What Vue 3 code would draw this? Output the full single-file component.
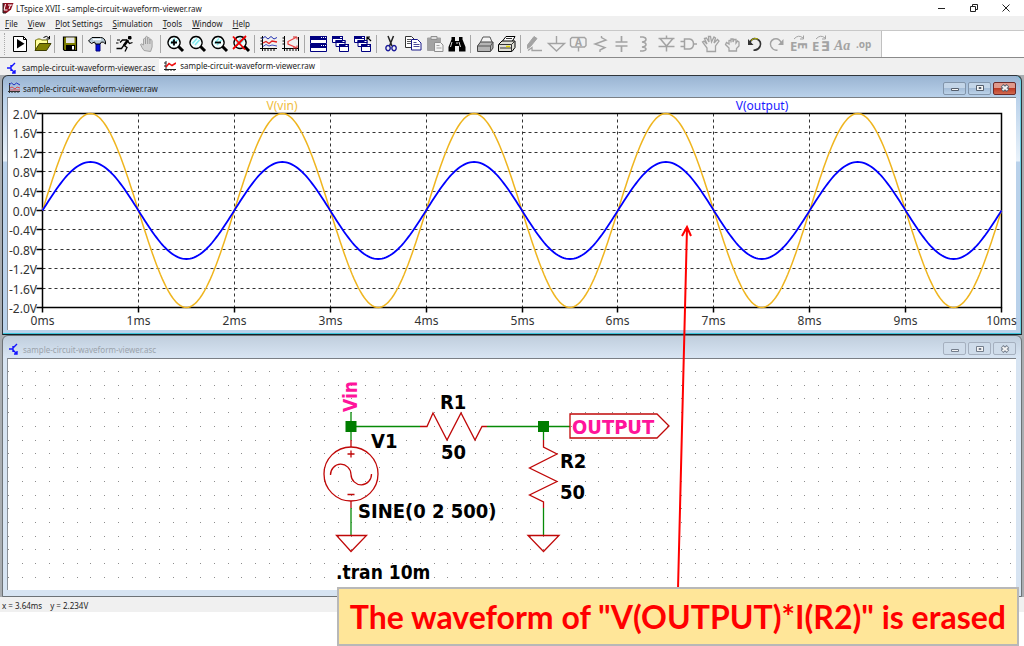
<script setup>
const menus = ['File', 'View', 'Plot Settings', 'Simulation', 'Tools', 'Window', 'Help']

const G = '#a3a3a3'
const N = 'none'
const K = '#000'
const NAVY = '#000080'

// Each shape: [path, fill, stroke, stroke width]
const lens = [
  ['M13 12L18 17', N, K, 3],
  ['M9 2.5A6 6 0 1 0 9.1 2.5Z', '#f4ffff', K, 1.4],
  ['M5.5 9.5L10 4.5M8 11L12.5 6', N, '#7fe9ee', 1.6]
]
const cascade = [
  ['M1.5 2.5h10v6h-10z', '#fff', NAVY, 1], ['M1 2h11v3H1z', NAVY, N, 0],
  ['M5 6.500h9v6h-9z', '#fff', NAVY, 1], ['M4.500 6h10v3h-10z', NAVY, N, 0],
  ['M8.500 10.500h9v7h-9z', '#fff', NAVY, 1], ['M8 10h10v3H8z', NAVY, N, 0],
  ['M9 3.500h2M11.500 7.500h2M14.500 11.500h2', N, '#fff', 1]
]
const axes = ['M3.5 2v15M1 14.5h17M1.500 4h2M1.500 7h2M1.500 10h2M6 15v2M9 15v2M12 15v2M15 15v2', N, K, 1]

const toolbar = [
  { name: 'Run', shapes: [['M4.500 2.500h10l3 3v12h-13z', '#fff', K, 1], ['M14.500 2.500v3h3', N, K, 1], ['M8 5l7.500 4.700L8 14.500z', K, N, 0]] },
  { name: 'Open', shapes: [['M4.500 16V6h1l1-1h3l1 1h6v3', '#ffff9c', '#6b6b00', 1], ['M4 16.500L8.500 9.500H20L15.500 16.500z', '#808000', '#3d3d00', 1], ['M12.500 3.500q3-2.500 5.500.500M18.500 2v3h-3', N, K, 1]] },
  { sep: true },
  { name: 'Save', shapes: [['M4.500 3h13v13.500H5.500l-1-1z', '#808000', K, 1.2], ['M7 3.500h8.500v5.500H7z', '#e6e6e6', N, 0], ['M7 11h9v5.500H7z', K, N, 0], ['M13 12h2v3.500h-2z', '#fff', N, 0]] },
  { sep: true },
  { name: 'Control Panel', shapes: [['M9 9h4v8H9z', '#0010d8', NAVY, 1], ['M5 3.500h8.500q4 0 5 4.500v2q-2-2.500-4-2l-1.500 2H8.500L7.500 8L4.500 9.500L1.500 7z', '#b9cdd8', K, 1], ['M6 5.500h8', N, '#fff', 1.5]] },
  { sep: true },
  { name: 'Start', shapes: [['M13.500 2.500h2.500v2.500h-2.500z', K, K, 1], ['M13 6L9 11.500', N, K, 2.6], ['M12 6H7.500L5 8.500M12.500 7L14.500 9.500L17.500 8.500M9 11.500L12 13.500L10 17.500M9 11L6.500 14.500H1.500', N, K, 1.3], ['M2 6h3M1 9h2.500', N, K, 1]] },
  { name: 'Halt', shapes: [['M7 16.500Q5 14 3.500 10.500q1-1.500 3 .500V5q1.500-1.500 2 0V3q1.500-1.500 2.200 0v1q1.500-1.200 2.200.500V6q1.500-1 2.200.500V13l-1.500 4.500z', '#d4d4d4', G, 1], ['M8.500 5v5M10.700 4v6M12.900 5v5', N, '#9a9a9a', 1]] },
  { sep: true },
  { name: 'Zoom in', shapes: [...lens, ['M6 8.500h6M9 5.500v6', N, K, 1.8]] },
  { name: 'Zoom', shapes: lens },
  { name: 'Zoom out', shapes: [...lens, ['M6 8.500h6', N, K, 1.8]] },
  { name: 'Zoom full extents', shapes: [...lens, ['M2 2.500L14 15.500M15 2L2 15', N, '#f00000', 1.8]] },
  { sep: true },
  { name: 'Autorange', shapes: [axes, ['M3 5L6 2.500L9 5L12 2.500L15 5L18 3.500', N, '#2030b0', 1], ['M4 9L7 7.500L10 9.500L13 7L18 8', N, '#e02020', 1.3], ['M4 12.500L7 10.500L10 12L13 11L18 12', N, '#4050c0', 1]] },
  { name: 'Axis range', shapes: [axes, ['M15 3.500L7 7.500V10L15 13.500', N, '#f04040', 1.2], ['M12 3h4v2.500M12 14h4v-2.500', N, '#d02020', 1], ['M17.500 3v14', N, K, 1]] },
  { sep: true },
  { name: 'Tile', shapes: [['M1.500 2.500h16v7h-16zM1.500 10.500h16v7h-16z', '#fff', NAVY, 1], ['M1 2h17v4H1zM1 10h17v4H1z', NAVY, N, 0], ['M12 3.500h1M14 3.500h1M16 3.500h1M12 11.500h1M14 11.500h1M16 11.500h1', N, '#fff', 1]] },
  { name: 'Cascade', shapes: cascade },
  { name: 'Close all', shapes: [...cascade, ['M18 7L14 3M14 6V3h3', N, K, 1.2]] },
  { sep: true },
  { name: 'Cut', shapes: [['M7 2L11 12M12.500 2L8.500 12', N, '#222', 1.5], ['M7 11.500a2.200 2.600 0 1 0 .100 0zM13 11.500a2.200 2.600 0 1 0 .100 0z', N, '#1a1a9a', 1.4]] },
  { name: 'Copy', shapes: [['M2.500 2.500h6l3 3v8h-9z', '#fff', '#333', 1], ['M4 5.500h4M4 7.500h5M4 9.500h5', N, '#555', 1], ['M8.500 5.500h6l3.500 3.500v7h-9.500z', '#fff', '#1a1a8a', 1], ['M10.500 8.500h3M10.500 10.500h6M10.500 12.500h6', N, '#4a4a9a', 1]] },
  { name: 'Paste', shapes: [['M2.500 4h13v12.500h-13z', G, G, 1], ['M6 2.500h6v3H6z', '#ddd', '#8f8f8f', 1], ['M9.500 8.500h6l2.500 2.500v6.500H9.500z', '#f3f3f3', '#8f8f8f', 1], ['M11.500 11.500h3M11.500 14h5', N, G, 1]] },
  { name: 'Find', shapes: [['M4.500 3h3.500v4H12V3h3.500v2.500L18.500 13v4.500h-6.500V12H8v5.500H1.500V13L4.500 5.500z', K, N, 0], ['M5 8L3.500 13M12 8l1.500 5M9 9h2', N, '#ddd', 1]] },
  { sep: true },
  { name: 'Print', shapes: [['M5.500 8L8 3h7l2 5', '#f4f4f4', '#555', 1], ['M2.500 12L5.500 8H18v6l-2.500 3.500h-13z', '#b4b4b4', '#444', 1], ['M2.500 12h13v5.500M15.500 12L18 8', N, '#555', 1]] },
  { name: 'Print setup', shapes: [['M5.500 7L9 2.500h9L15.500 7', '#fff', K, 1], ['M1.500 10.500L5 7h13v6.500L15 17.500H1.500z', '#e0e0d8', K, 1], ['M1.500 10.500h13v7M14.500 10.500L18 7M3 14h11M9 4.500h6', N, '#333', 1], ['M9 12.500h4', N, '#e3d800', 1.500]] },
  { sep: true },
  { name: 'Wire', shapes: [['M9 2.500L12 4.500L5.500 12.500L2.500 14.500V11z', G, G, 1], ['M3 16.500L7 13.500V16.500H17', N, G, 1.3]] },
  { name: 'Ground', shapes: [['M9.500 2v7.500M1.500 9.500h16L9.500 17z', N, G, 1.4]] },
  { name: 'Label net', shapes: [['M3 3.500h12.500l1.500 1.500v6.500l-1.500 1.500H3L1.500 11.500V5zM9.500 13v4.500', N, G, 1.4]], texts: [{ t: 'A', x: 6, y: 12, s: 10 }] },
  { name: 'Resistor', shapes: [['M10.500 2v1.500L15 6L4 10L14 13.500L9 16v2', N, G, 1.4]] },
  { name: 'Capacitor', shapes: [['M8.500 2v6M8.500 12v6M2.500 8h12M2.500 12h12', N, G, 1.7]] },
  { name: 'Inductor', shapes: [['M5 3h3q3 .500 3 2.500T7 8q4 .500 4 2.500T7 13q4 .500 4 2T8 17H5', N, G, 1.5]] },
  { name: 'Diode', shapes: [['M9.500 1.500v3M9.500 12v5.500M1.500 4.500h16M3 4.500L9.500 12L16 4.500M1.500 12.500h16', N, G, 1.5]] },
  { name: 'Component', shapes: [['M5.500 5h5q4 .500 4 5t-4 5h-5zM1.500 7.500h4M1.500 12.500h4M14.500 10H18', N, G, 1.5]] },
  { name: 'Move', shapes: [['M6 17.500V14L1.500 8L3 7l3 3L3.500 4.500L5.500 4L8 8L7.500 2.500h2L10.500 8L13 3l1.500 1L13 9l3.500-3.500L18 7L14.500 12V17.500z', '#eee', G, 1.3]] },
  { name: 'Drag', shapes: [['M6 17V14L2.500 10.500L3.500 8.500L6 10V6.500L8 6v2.500V5h2v3L11 5.500h2V9l1.500-2L16 8V12L13.500 14.500V17z', '#eee', G, 1.3]] },
  { name: 'Undo', shapes: [['M4.500 9Q7 3.500 12 5Q17 7.500 15 12.500Q12.500 17 8.500 16', N, '#333', 1.6], ['M6 6.500Q9 3 13 5', N, '#b4b400', 1], ['M3 5v6h5.500z', '#333', N, 0]] },
  { name: 'Redo', shapes: [['M14.500 9Q12 3.500 7 5Q2 7.500 4 12.500Q6.500 17 10.500 16', N, G, 1.4], ['M16.500 5v6H11z', G, N, 0]] },
  { name: 'Rotate', shapes: [['M5 5Q9.500 0 14 4M14.500 1.500V5H11', N, G, 1]], texts: [{ t: 'E', x: 1, y: 17, s: 13 }, { t: 'E', x: 0, y: 0, s: 13, tf: 'translate(9 8) rotate(90)' }] },
  { name: 'Mirror', shapes: [['M5 5Q9.500 0 14 4M14.500 1.500V5H11', N, G, 1]], texts: [{ t: 'E', x: 1, y: 17, s: 13 }, { t: '∃', x: 10, y: 17, s: 13 }] },
  { name: 'Text', shapes: [], texts: [{ t: 'Aa', x: 1, y: 16, s: 14, serif: true }] },
  { name: 'SPICE directive', shapes: [], texts: [{ t: '.op', x: 1, y: 14, s: 10 }] }
]

const plot = { x0: 42.5, x1: 1001.5, y0: 113.5, y1: 307.5 }
const dx = (plot.x1 - plot.x0) / 10
const dy = (plot.y1 - plot.y0) / 10
const xTicks = Array.from({ length: 11 }, (_, i) => ({ x: Math.floor(plot.x0 + i * dx) + 0.5, label: i + 'ms' }))
const yTicks = Array.from({ length: 11 }, (_, i) => ({ y: Math.floor(plot.y0 + i * dy) + 0.5, label: ((20 - i * 4) / 10).toFixed(1) + 'V' }))

function sine(volts) {
  const mid = (plot.y0 + plot.y1) / 2
  const points = []
  for (let i = 0; i <= 480; i++) {
    const ms = i / 48
    points.push((plot.x0 + ms * dx).toFixed(1) + ',' + (mid - (volts / 0.4) * dy * Math.sin(Math.PI * ms)).toFixed(1))
  }
  return points.join(' ')
}
const vin = sine(2)
const vout = sine(1)

let gridDots = ''
for (let r = 0; r < 16; r++) {
  for (let c = 0; c < 74; c++) {
    gridDots += `M${Math.round(8 + c * 13.73)} ${Math.round(371 + r * 13.73)}.5h1`
  }
}
</script>

<template>
  <div class="app">
    <header class="titlebar">
      <svg class="logo" viewBox="0 0 12 12" aria-hidden="true">
        <path d="M1 1h10.500L9 7.500L4.500 11H1z" fill="#8d1020" />
        <path d="M3.500 2L2 8h3.500M6 3h4.500M8.500 3L7 7" fill="none" stroke="#fff" stroke-width="1" />
        <path d="M1 1v10L4 11" fill="none" stroke="#222" />
      </svg>
      <span class="app-title">LTspice XVII - sample-circuit-waveform-viewer.raw</span>
      <div class="sys">
        <button aria-label="Minimize"><svg viewBox="0 0 10 10"><path d="M1 5.500h7" /></svg></button>
        <button aria-label="Restore"><svg viewBox="0 0 10 10"><path d="M1.500 3.500h5v5h-5zM3.500 3.500v-2h5v5h-2" /></svg></button>
        <button aria-label="Close"><svg viewBox="0 0 10 10"><path d="M1.500 1.500l7 7M8.500 1.500l-7 7" /></svg></button>
      </div>
    </header>

    <nav class="menubar">
      <button v-for="m in menus" :key="m"><u>{{ m[0] }}</u>{{ m.slice(1) }}</button>
    </nav>

    <div class="toolbar-row">
      <div class="toolbar" role="toolbar" aria-label="Tools">
        <template v-for="(b, i) in toolbar" :key="i">
          <span v-if="b.sep" class="sep"></span>
          <button v-else :aria-label="b.name">
            <svg viewBox="0 0 20 20">
              <path v-for="(s, j) in b.shapes" :key="j" :d="s[0]" :fill="s[1]" :stroke="s[2]" :stroke-width="s[3]" />
              <text v-for="(t, j) in b.texts || []" :key="'t' + j" :x="t.x" :y="t.y" :font-size="t.s" :transform="t.tf" :class="{ script: t.serif }">{{ t.t }}</text>
            </svg>
          </button>
        </template>
      </div>
    </div>

    <div class="tabs" role="tablist">
      <button class="tab" role="tab" aria-selected="false">
        <svg viewBox="0 0 12 12"><path d="M5 3v6M1 6h4M5 5l4-4M5 7l4 4M6 11h3V8" fill="none" stroke="#1414ff" stroke-width="1.400" /></svg>
        <span>sample-circuit-waveform-viewer.asc</span>
      </button>
      <button class="tab active" role="tab" aria-selected="true">
        <svg viewBox="0 0 12 12"><path d="M2 1v10M0 9.500h12M4 9v2M7 9v2M10 9v2M0 3h2M0 6h2" fill="none" stroke="#222" /><path d="M2 7l3-3.500L8 5.500L12 3" fill="none" stroke="#f01010" stroke-width="1.500" /></svg>
        <span>sample-circuit-waveform-viewer.raw</span>
      </button>
    </div>

    <main class="mdi">
      <section class="win win-active">
        <div class="win-title">
          <svg class="win-icon" viewBox="0 0 12 12"><path d="M1.500 1v10M0 9.500h12M4 9v2M7 9v2M10 9v2" fill="none" stroke="#333" /><path d="M1 3l2.500-2L6 3l2.500-2L12 3" fill="none" stroke="#2030c0" /><path d="M2 6l2-1L7 7l2-2l3 1M2 8h10" fill="none" stroke="#d84850" /></svg>
          <h2>sample-circuit-waveform-viewer.raw</h2>
          <div class="win-buttons">
            <button aria-label="Minimize"><svg viewBox="0 0 10 8"><path d="M1.500 4.500h7v2h-7z" /></svg></button>
            <button aria-label="Maximize"><svg viewBox="0 0 10 8"><path d="M1.500 1.500h7v5h-7zM4 3.500h2v1H4z" /></svg></button>
            <button class="close" aria-label="Close"><svg viewBox="0 0 10 8"><path class="x-edge" d="M2 1.500l6 5M8 1.500l-6 5" /><path class="x-core" d="M2.500 2l5 4M7.500 2l-5 4" /></svg></button>
          </div>
        </div>
        <div class="client">
          <svg class="canvas" viewBox="8 98 1008 232" role="img" aria-label="Waveform plot">
            <g class="grid">
              <line v-for="t in xTicks.slice(1, 10)" :key="t.label" :x1="t.x" :x2="t.x" :y1="plot.y0" :y2="plot.y1" />
              <line v-for="t in yTicks.slice(1, 10)" :key="t.label" :x1="plot.x0" :x2="plot.x1" :y1="t.y" :y2="t.y" />
            </g>
            <g class="axis">
              <rect :x="plot.x0" :y="plot.y0" :width="plot.x1 - plot.x0" :height="plot.y1 - plot.y0" />
              <line v-for="t in xTicks" :key="t.label" :x1="t.x" :x2="t.x" :y1="plot.y1" :y2="plot.y1 + 5" />
              <line v-for="t in yTicks" :key="t.label" :x1="plot.x0 - 6" :x2="plot.x0" :y1="t.y" :y2="t.y" />
            </g>
            <polyline class="trace vin" :points="vin" />
            <polyline class="trace vout" :points="vout" />
            <g class="labels">
              <text v-for="t in yTicks" :key="t.label" x="37" :y="t.y + 5" text-anchor="end">{{ t.label }}</text>
              <text v-for="t in xTicks" :key="t.label" :x="t.x" y="325" text-anchor="middle">{{ t.label }}</text>
              <text class="name-vin" x="282" y="110" text-anchor="middle">V(vin)</text>
              <text class="name-vout" x="762" y="110" text-anchor="middle">V(output)</text>
            </g>
          </svg>
        </div>
      </section>

      <section class="win win-idle">
        <div class="win-title">
          <svg class="win-icon" viewBox="0 0 12 12"><path d="M5 3v6M1 6h4M5 5l4-4M5 7l4 4M6 11h3V8" fill="none" stroke="#1414ff" stroke-width="1.400" /></svg>
          <h2>sample-circuit-waveform-viewer.asc</h2>
          <div class="win-buttons">
            <button aria-label="Minimize"><svg viewBox="0 0 10 8"><path d="M1.500 4.500h7v2h-7z" /></svg></button>
            <button aria-label="Maximize"><svg viewBox="0 0 10 8"><path d="M1.500 1.500h7v5h-7zM4 3.500h2v1H4z" /></svg></button>
            <button aria-label="Close"><svg viewBox="0 0 10 8"><path class="x-edge" d="M2 1.500l6 5M8 1.500l-6 5" /><path class="x-core" d="M2.500 2l5 4M7.500 2l-5 4" /></svg></button>
          </div>
        </div>
        <div class="client">
          <svg class="canvas" viewBox="8 359 1008 231" role="img" aria-label="Circuit schematic">
            <path :d="gridDots" stroke="#8c8c8c" stroke-width="1" />
            <path class="wire" d="M351 412V440M351 426.500H420M487 426.500H570M351 508V535M543.500 426V440M543.500 508V535" />
            <path class="node" d="M345.500 421h11v11h-11zM538 421h11v11h-11z" />
            <path class="part" d="M420 426.500H427L433 413L447 440L461 413L475 440L482 426.500H487" />
            <path class="part" d="M543.500 440V447L557 454L529.500 468L557 481.500L529.500 495L543.500 502V508" />
            <circle class="part" cx="351" cy="474" r="27" />
            <path class="part" d="M351 440v7M351 501v7M351 450.500v7M347.500 454h7M347.500 494.500h7" />
            <path class="part" d="M330.500 475A10.200 10.500 0 0 1 351 474.500A10.200 10.500 0 0 0 371.500 474" />
            <path class="part" d="M336.500 535.500h30L351 551.500zM528 535.500h31L543.500 551.500z" />
            <path class="part" d="M570 414H657L669 426L657 438H570z" />
            <g class="texts">
              <text x="440" y="409">R1</text>
              <text x="441" y="459">50</text>
              <text x="371" y="448">V1</text>
              <text x="560" y="468">R2</text>
              <text x="560" y="499">50</text>
              <text x="358" y="518">SINE(0 2 500)</text>
              <text class="mid" x="336" y="579">.tran 10m</text>
              <text class="net" x="572" y="434">OUTPUT</text>
              <text class="net mid" transform="translate(357 412) rotate(-90)">Vin</text>
            </g>
          </svg>
        </div>
      </section>
    </main>

    <footer class="status"><span>x = 3.64ms</span><span>y = 2.234V</span></footer>

    <svg class="arrow" viewBox="0 0 1024 646" aria-hidden="true">
      <path d="M678 589L687 228M682 236L687 227L691 236" />
    </svg>
    <p class="callout">The waveform of "V(OUTPUT)*I(R2)" is erased</p>
  </div>
</template>

<style>
body { margin: 0; background: #fff; }
</style>

<style scoped>
.app {
  position: relative;
  min-height: 100vh;
  background: #fff;
  font-family: "Noto Sans", "Open Sans", sans-serif;
  font-size: 8px;
  line-height: 12px;
  color: #222;
}
button {
  margin: 0;
  padding: 0;
  border: 0;
  background: none;
  font: inherit;
  color: inherit;
}
.titlebar { display: flex; align-items: center; height: 16px; padding: 0 2px; }
.logo { width: 12px; height: 12px; margin-right: 2px; }
.app-title { flex: 1; padding-top: 1px; }
.sys { display: flex; }
.sys button { display: flex; justify-content: center; width: 32px; }
.sys svg { width: 10px; height: 10px; fill: none; stroke: #222; }
.menubar {
  display: flex;
  align-items: flex-end;
  height: 14px;
  background: #f0f0f0;
  border-bottom: 1px solid #c8c8c8;
}
.menubar button { padding: 0 5px; }
.toolbar-row { display: flex; height: 26px; border-bottom: 1px solid #8a8a8a; }
.toolbar {
  display: flex;
  align-items: center;
  padding: 0 5px 0 4px;
  background: #f0f0f0;
  border-right: 1px solid #c0c0c0;
}
.toolbar::before { content: ""; width: 2px; height: 22px; margin-right: 2px; border-left: 1px dotted #aaa; box-sizing: border-box; }
.toolbar button { display: flex; justify-content: center; width: 22px; }
.toolbar svg { width: 20px; height: 20px; overflow: visible; }
.toolbar text { fill: #a3a3a3; font-family: "Noto Sans", "DejaVu Sans", sans-serif; font-weight: bold; }
.toolbar text.script { font-family: "Liberation Serif", serif; font-style: italic; }
.sep { width: 1px; height: 18px; margin: 0 3px 0 2px; background: #a8a8a8; }
.tabs { display: flex; height: 17px; background: #f0f0f0; }
.tab { display: flex; align-items: center; gap: 4px; height: 17px; padding: 2px 4px 0 6px; }
.tab svg { width: 12px; height: 12px; }
.tab.active { height: 15px; padding: 0 5px; background: #fff; border-top: 1px solid #ddd; box-sizing: border-box; }
.mdi { padding: 0 2px; background: #a9adb1; }
.win { border: 1px solid #30363c; border-radius: 6px 6px 0 0; padding: 0 5px 4px 4px; }
.win-active {
  border-bottom-color: #102028;
  background: linear-gradient(#9ab4d2 0, #b9d1ea 21px, #e9f2fa 85px, #b9d1ea 86px);
  box-shadow: inset 0 -1px #3cc4da, inset -1px 0 #6cd0e4;
}
.win-idle { border-color: #6d7276; background: linear-gradient(#c0cedd 0, #d7e4f2 21px); padding-bottom: 6px; }
.win-title { display: flex; align-items: center; height: 21px; }
.win-idle .win-title { height: 22px; }
.win-idle h2 { color: #9ba3ab; }
.win-icon { width: 12px; height: 12px; margin: 3px 3px 0 1px; }
.win-title h2 { flex: 1; margin: 5px 0 0; font-size: 8px; font-weight: normal; line-height: 12px; }
.win-buttons { display: flex; gap: 2px; margin-top: 3px; }
.win-buttons button {
  display: flex;
  align-items: center;
  justify-content: center;
  width: 23px;
  height: 13px;
  border: 1px solid #8295ab;
  border-radius: 2px;
  background: linear-gradient(#c3d5e8 45%, #a5bdd8 50%, #bcd2e8);
}
.win-idle .win-buttons button { background: #cfdcea; border-color: #a5b0bf; }
.win-buttons svg { width: 10px; height: 8px; fill: #f4f4f4; stroke: #56606e; }
.win-idle .win-buttons svg { stroke: #747e8c; }
.win-buttons .x-edge { stroke-width: 4; }
.win-buttons .x-core { stroke: #f4f4f4; stroke-width: 2; }
.win-buttons .close { border-color: #6e2a28; background: linear-gradient(#e0998c 45%, #be3a24 50%, #d06a50); }
.client { border-top: 1px solid #7a7f85; border-left: 1px solid #8a9098; background: #fff; }
.canvas { display: block; width: 100%; height: auto; overflow: visible; }
.grid line { stroke: #333; stroke-dasharray: 3 3; }
.axis { fill: none; stroke: #000; stroke-width: 1.5; }
.trace { fill: none; stroke-width: 1.5; }
.vin { stroke: #efb51f; }
.vout { stroke: #0000ff; stroke-width: 1.8; }
.labels { font-size: 12px; fill: #333; }
.name-vin { fill: #efbc3c; }
.name-vout { fill: #1a1aff; }
.wire { fill: none; stroke: #078a07; stroke-width: 1.3; }
.node { fill: #007d00; }
.part { fill: none; stroke: #c00808; stroke-width: 1.3; }
.texts { font-family: "DejaVu Sans Condensed", "DejaVu Sans", sans-serif; font-weight: bold; font-size: 20px; fill: #000; }
.texts .mid { font-size: 19px; }
.texts .net { fill: #ff149b; }
.status { display: flex; gap: 8px; height: 15px; padding: 2px 2px 0; box-sizing: border-box; align-items: center; background: #f0f0f0; }
.arrow { position: absolute; top: 0; left: 0; width: 100%; pointer-events: none; fill: none; stroke: #f00; stroke-width: 2; }
.callout {
  position: absolute;
  top: 587px;
  right: 5px;
  margin: 0;
  padding: 0 11px;
  border: 2px solid #b8b8b8;
  background: #ffe699;
  color: #f00;
  font-family: Lato, "Open Sans", sans-serif;
  font-size: 32px;
  font-weight: bold;
  line-height: 55px;
  white-space: nowrap;
}
</style>
